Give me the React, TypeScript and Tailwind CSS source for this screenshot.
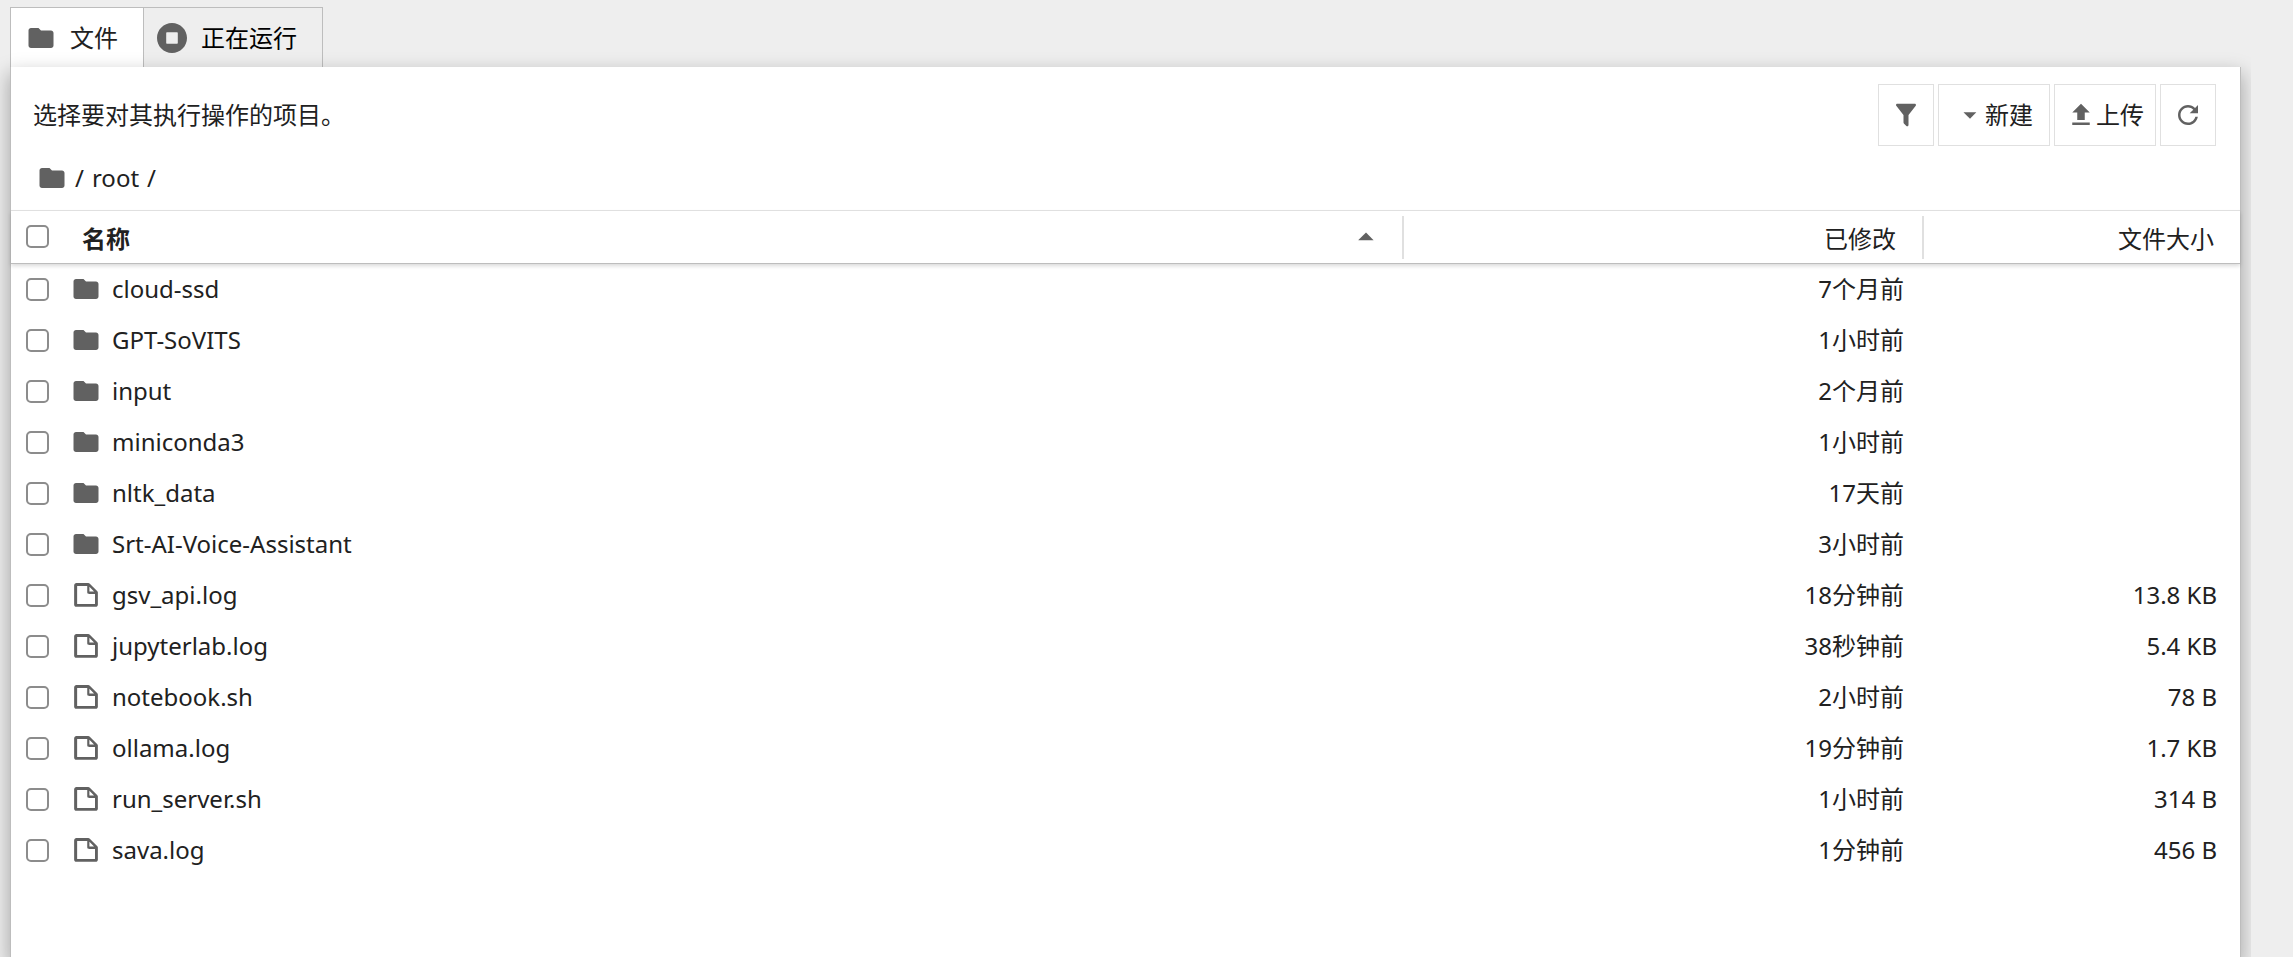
import { ReactNode } from 'react';

interface FileItem {
  name: string;
  type: 'folder' | 'file';
  modified: string;
  size?: string;
}

const items: FileItem[] = [
  { name: 'cloud-ssd', type: 'folder', modified: '7个月前' },
  { name: 'GPT-SoVITS', type: 'folder', modified: '1小时前' },
  { name: 'input', type: 'folder', modified: '2个月前' },
  { name: 'miniconda3', type: 'folder', modified: '1小时前' },
  { name: 'nltk_data', type: 'folder', modified: '17天前' },
  { name: 'Srt-AI-Voice-Assistant', type: 'folder', modified: '3小时前' },
  { name: 'gsv_api.log', type: 'file', modified: '18分钟前', size: '13.8 KB' },
  { name: 'jupyterlab.log', type: 'file', modified: '38秒钟前', size: '5.4 KB' },
  { name: 'notebook.sh', type: 'file', modified: '2小时前', size: '78 B' },
  { name: 'ollama.log', type: 'file', modified: '19分钟前', size: '1.7 KB' },
  { name: 'run_server.sh', type: 'file', modified: '1小时前', size: '314 B' },
  { name: 'sava.log', type: 'file', modified: '1分钟前', size: '456 B' },
];

interface IconProps {
  d: string;
  viewBox?: string;
  className?: string;
}

const Icon = ({ d, viewBox = '0 0 24 24', className = 'size-[30px]' }: IconProps) => (
  <svg className={`shrink-0 fill-[#616161] ${className}`} viewBox={viewBox} aria-hidden="true">
    <path d={d} />
  </svg>
);

const FolderIcon = () => (
  <Icon d="M10 4H4c-1.1 0-1.99.9-1.99 2L2 18c0 1.1.9 2 2 2h16c1.1 0 2-.9 2-2V8c0-1.1-.9-2-2-2h-8l-2-2z" />
);

const FileIcon = () => (
  <Icon
    viewBox="0 0 22 22"
    d="M19.3 8.2l-5.5-5.5c-.3-.3-.7-.5-1.2-.5H3.9c-.8.1-1.6.9-1.6 1.8v14.1c0 .9.7 1.6 1.6 1.6h14.2c.9 0 1.6-.7 1.6-1.6V9.4c.1-.5-.1-.9-.4-1.2zm-5.8-3.3l3.4 3.6h-3.4V4.9zm3.9 12.7H4.7c-.1 0-.2 0-.2-.2V4.7c0-.2.1-.3.2-.3h7.2v4.4s0 .8.3 1.1c.3.3 1.1.3 1.1.3h4.3v7.2s-.1.2-.2.2z"
  />
);

const RunningIcon = () => (
  <Icon
    viewBox="8 8 496 496"
    d="M256 8C119 8 8 119 8 256s111 248 248 248 248-111 248-248S393 8 256 8zm96 328c0 8.8-7.2 16-16 16H176c-8.8 0-16-7.2-16-16V176c0-8.8 7.2-16 16-16h160c8.8 0 16 7.2 16 16v160z"
  />
);

const FilterIcon = () => (
  <Icon d="M14 12v7.88c.04.3-.06.62-.29.83-.39.39-1.02.39-1.41 0l-2.01-2.01c-.23-.23-.33-.54-.29-.83V12h-.03L4.21 4.62c-.34-.43-.26-1.06.17-1.4.19-.14.4-.22.62-.22h14c.22 0 .43.08.62.22.43.34.51.97.17 1.4L14.03 12H14z" />
);

const UploadIcon = () => <Icon d="M5 20h14v-2H5v2zM5 10h4v6h6v-6h4l-7-7-7 7z" />;

const RefreshIcon = () => (
  <Icon
    viewBox="0 0 18 18"
    d="M9 13.5c-2.49 0-4.5-2.01-4.5-4.5S6.51 4.5 9 4.5c1.24 0 2.36.52 3.17 1.33L10 8h5V3l-1.76 1.76C12.15 3.68 10.66 3 9 3 5.69 3 3.01 5.69 3.01 9S5.69 15 9 15c2.97 0 5.43-2.16 5.9-5h-1.52c-.46 2-2.24 3.5-4.38 3.5z"
  />
);

interface ToolbarButtonProps {
  label?: string;
  className?: string;
  children: ReactNode;
}

const ToolbarButton = ({ label, className = 'px-3', children }: ToolbarButtonProps) => (
  <button
    type="button"
    aria-label={label}
    className={`flex h-[62px] items-center border border-[#e0e0e0] bg-white ${className}`}
  >
    {children}
  </button>
);

const Checkbox = ({ label }: { label: string }) => (
  <input
    type="checkbox"
    aria-label={label}
    className="block size-[23px] appearance-none rounded-[5px] border-2 border-[#8c8c8c] bg-white"
  />
);

export default function App() {
  return (
    <div className="min-h-screen bg-[#eeeeee] font-['Noto_Sans','Noto_Sans_CJK_SC',sans-serif] text-2xl leading-8 text-[#212121]">
      <div className="mr-[42px] flex min-h-screen flex-col overflow-hidden pt-[7px] pr-[10px] pl-[10px]">
        <div role="tablist" className="flex h-[60px]">
          <button
            type="button"
            role="tab"
            aria-selected="true"
            className="flex items-center gap-[14px] border-t border-l border-[#bdbdbd] bg-white pr-[25px] pl-[15px]"
          >
            <FolderIcon />
            文件
          </button>
          <button
            type="button"
            role="tab"
            aria-selected="false"
            className="flex items-center gap-[14px] border-x border-t border-[#bdbdbd] pr-[25px] pl-[13px] text-black"
          >
            <RunningIcon />
            正在运行
          </button>
        </div>

        <main className="flex-1 border-x border-[#bdbdbd] bg-white shadow-[0_8px_18px_2px_rgba(0,0,0,0.28)]">
          <div className="flex items-center justify-between pt-[17px] pr-6 pl-[22px]">
            <p>选择要对其执行操作的项目。</p>
            <div className="flex gap-1">
              <ToolbarButton label="筛选">
                <FilterIcon />
              </ToolbarButton>
              <ToolbarButton className="px-4">
                <Icon viewBox="0 0 18 18" d="M5.2,7.5L9,11.2l3.8-3.8H5.2z" />
                新建
              </ToolbarButton>
              <ToolbarButton className="px-[11px]">
                <UploadIcon />
                上传
              </ToolbarButton>
              <ToolbarButton label="刷新">
                <RefreshIcon />
              </ToolbarButton>
            </div>
          </div>

          <nav className="flex h-16 items-center gap-2 pl-[26px]">
            <a href="#" aria-label="主目录">
              <FolderIcon />
            </a>
            <span>/</span>
            <a href="#root">root</a>
            <span>/</span>
          </nav>

          <table className="w-full table-fixed border-collapse">
            <colgroup>
              <col className="w-[50px]" />
              <col />
              <col className="w-[520px]" />
              <col className="w-[316px]" />
            </colgroup>
            <thead className="shadow-[0_2px_4px_rgba(0,0,0,0.15)]">
              <tr className="h-[53px] border-t border-b border-t-[#e0e0e0] border-b-[#bdbdbd]">
                <th className="p-0 pb-0.5 pl-[15px] text-left">
                  <Checkbox label="全选" />
                </th>
                <th className="p-0" aria-sort="ascending">
                  <div className="flex h-[43px] items-center justify-between border-r-2 border-[#e0e0e0] pr-[18px] pl-[21px]">
                    <span className="pt-1">名称</span>
                    <Icon viewBox="0 0 18 18" className="size-9" d="M5.2,10.5L9,6.8l3.8,3.8H5.2z" />
                  </div>
                </th>
                <th className="p-0 font-normal">
                  <div className="flex h-[43px] items-center justify-end border-r-2 border-[#e0e0e0] pt-1 pr-[26px]">
                    已修改
                  </div>
                </th>
                <th className="p-0 pt-1 pr-[26px] text-right font-normal">文件大小</th>
              </tr>
            </thead>
            <tbody>
              {items.map((item) => (
                <tr key={item.name} className="h-[51px]">
                  <td className="p-0 pl-[15px]">
                    <Checkbox label={item.name} />
                  </td>
                  <td className="p-0 pl-[10px]">
                    <a href={`#${item.name}`} className="flex items-center gap-[11px]">
                      {item.type === 'folder' ? <FolderIcon /> : <FileIcon />}
                      {item.name}
                    </a>
                  </td>
                  <td className="p-0 pr-5 text-right">{item.modified}</td>
                  <td className="p-0 pr-[23px] text-right">{item.size}</td>
                </tr>
              ))}
            </tbody>
          </table>
        </main>
      </div>
    </div>
  );
}
